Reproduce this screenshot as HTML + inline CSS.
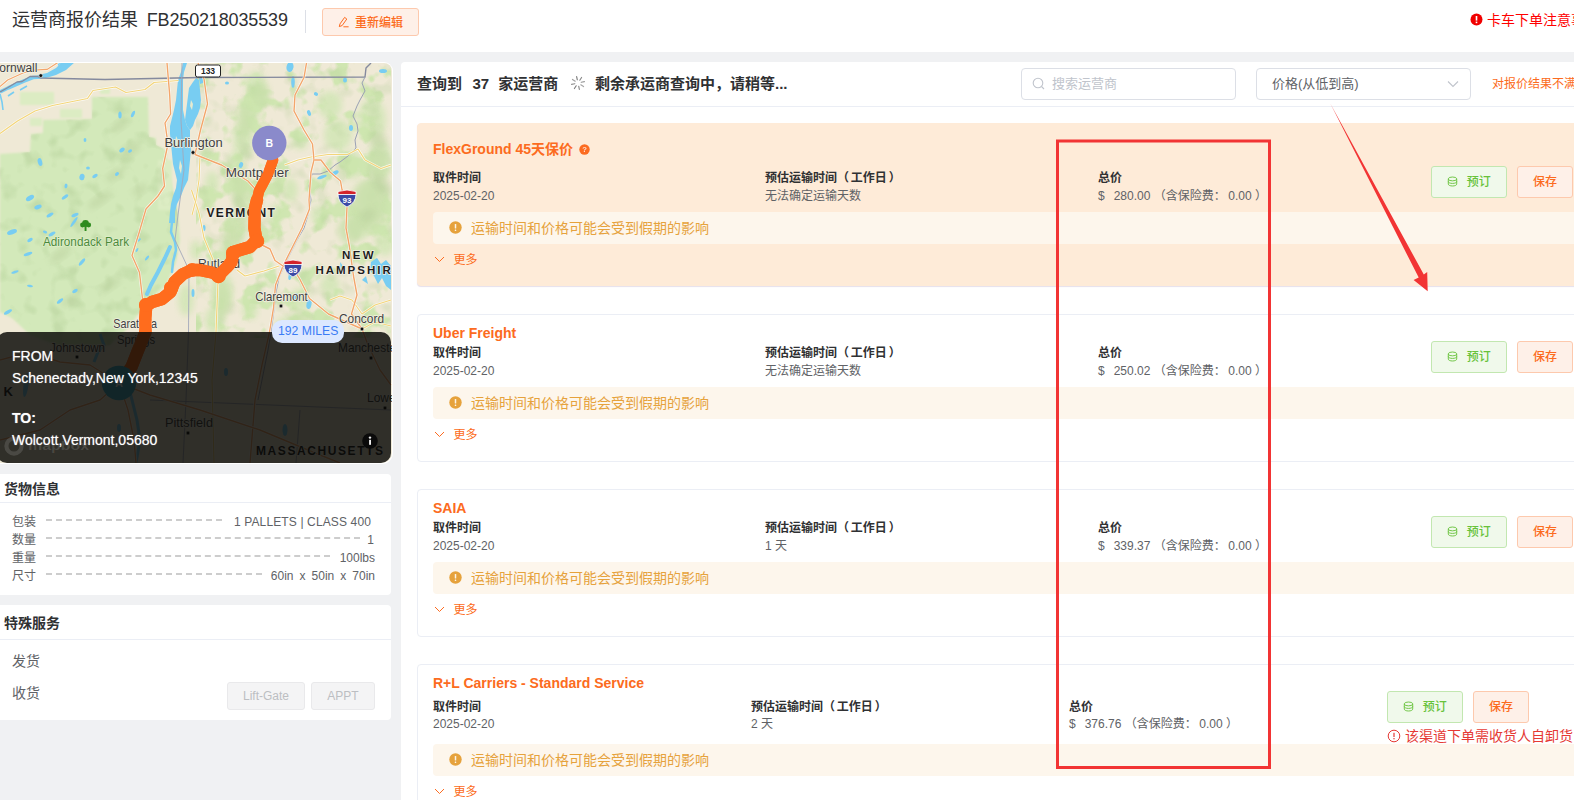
<!DOCTYPE html>
<html lang="zh-CN">
<head>
<meta charset="utf-8">
<title>运营商报价结果</title>
<style>
*{box-sizing:border-box;margin:0;padding:0}
html,body{width:1574px;height:800px;overflow:hidden;background:#f0f1f3}
body{position:relative;font-family:"Liberation Sans","Noto Sans CJK SC",sans-serif;font-size:12px;color:#606266}
.abs{position:absolute}
.t{position:absolute;white-space:nowrap;line-height:1}
#hdr{left:0;top:0;width:1574px;height:52px;background:#fff}
#title{left:12px;top:10px;font-size:18px;color:#303133;line-height:20px}
#vdiv{left:305px;top:10px;width:1px;height:23px;background:#dcdfe6}
.btn{position:absolute;border:1px solid;border-radius:3px;font-size:12px;line-height:1;white-space:nowrap;display:flex;align-items:center;justify-content:center}
.btn-o{background:#fef0e8;border-color:#fdc9ad;color:#fc6b20}
.btn-g{padding-top:.6px;background:#f0f9eb;border-color:#c2e7b0;color:#67c23a}
.btn-d{background:#f4f4f5;border-color:#e9e9eb;color:#bcbec2}
.b5{font-weight:500}
.panel{position:absolute;left:0;width:391px;background:#fff;border-radius:0 4px 4px 0}
.ph{position:absolute;left:4px;font-size:14px;font-weight:bold;color:#303133;line-height:1;white-space:nowrap}
.hl{position:absolute;left:0;width:391px;height:1px;background:#ebeef5}
#rp{left:401px;top:62px;width:1173px;height:738px;background:#fff;border-radius:4px 0 0 0}
.card{position:absolute;left:417px;width:1170px;border:1px solid #ebeef5;border-radius:4px;background:#fff}
.card.hot{background:#feebd8;border-color:#feebd8;box-shadow:0 1px 1px #e6e0ec}
.ct{position:absolute;white-space:nowrap;line-height:1;font-size:14px;font-weight:bold;color:#fc6b20}
.lb{position:absolute;white-space:nowrap;line-height:1;font-size:12px;font-weight:bold;color:#303133}
.vl{position:absolute;white-space:nowrap;line-height:1;font-size:12px;color:#606266}
.warn{position:absolute;left:433px;width:1150px;height:32px;background:#fdf6ec;border-radius:4px}
.wt{position:absolute;white-space:nowrap;line-height:1;font-size:14px;color:#e6a23c}
.dash{position:absolute;height:0;border-top:2px dashed #cdcdcd}
.more{position:absolute;white-space:nowrap;line-height:1;font-size:12px;color:#fc6b20}

#mapw{left:0;top:62px;width:392.6px;height:402.2px;border-radius:0 9px 11px 0;background:#fff}
#map{left:0;top:63px;width:391.9px;height:400.3px;border-radius:0 8px 10px 0;overflow:hidden;background:#efe9d6}
#map text{font-family:"Liberation Sans",sans-serif}
.mc{font-size:13px;fill:#3f3f3f;paint-order:stroke;stroke:#f4f0e4;stroke-width:1.6px;stroke-linejoin:round}
.ms{font-size:12px;font-weight:bold;fill:#1d1d1d;letter-spacing:3px;paint-order:stroke;stroke:#f4f0e4;stroke-width:1.4px}
#ov{left:-3px;top:332px;width:393.8px;height:131.4px;background:rgba(8,8,6,.83);border-radius:10px}
.ot{position:absolute;left:15px;white-space:nowrap;line-height:1;font-size:14px;color:#fff;text-shadow:0 0 1px rgba(255,255,255,.6)}
#miles{left:272.3px;top:320.4px;width:71.8px;height:23px;border-radius:10px;background:#dce8ff;color:#3b7cf5;font-size:12.2px;line-height:23px;text-align:center;white-space:nowrap}
</style>
</head>
<body>

<div id="hdr" class="abs"></div>
<div id="title" class="t">运营商报价结果&nbsp; <span style="letter-spacing:-0.15px;margin-left:-1.3px">FB250218035539</span></div>
<div id="vdiv" class="abs"></div>
<div class="btn btn-o b5" style="left:322px;top:8px;width:97px;height:28px;padding-top:2px">
  <svg width="12" height="12" viewBox="0 0 12 12" style="margin-right:5px;margin-top:-2px"><path d="M1.3 10.6 L2 7.9 L6.6 1.4 L8.8 3 L4.2 9.5 Z M5.4 10.8 H10.6" fill="none" stroke="#fc6b20" stroke-width="1" stroke-linejoin="round"/></svg>重新编辑</div>
<svg class="abs" style="left:1469.5px;top:13.2px" width="13" height="13" viewBox="0 0 13 13"><circle cx="6.5" cy="6.5" r="6" fill="#f00000"/><rect x="5.7" y="3" width="1.6" height="4.6" fill="#fff"/><rect x="5.7" y="8.6" width="1.6" height="1.6" fill="#fff"/></svg>
<div class="t" style="left:1487px;top:13px;font-size:14px;color:#f00">卡车下单注意事项</div>

<div id="mapw" class="abs"></div><div id="map" class="abs"><svg width="392" height="401" viewBox="0 0 392 401"><defs><filter id="bl" x="-20%" y="-20%" width="140%" height="140%"><feGaussianBlur stdDeviation="3"/></filter><filter id="bl2" x="-20%" y="-20%" width="140%" height="140%"><feGaussianBlur stdDeviation="1.2"/></filter><filter id="mott" x="0" y="0" width="100%" height="100%" color-interpolation-filters="sRGB"><feTurbulence type="fractalNoise" baseFrequency="0.045" numOctaves="3" seed="11"/><feColorMatrix type="matrix" values="0 0 0 0 0.80  0 0 0 0 0.90  0 0 0 0 0.68  7 0 0 0 -3.6"/></filter><filter id="mott2" x="0" y="0" width="100%" height="100%" color-interpolation-filters="sRGB"><feTurbulence type="fractalNoise" baseFrequency="0.06" numOctaves="2" seed="5"/><feColorMatrix type="matrix" values="0 0 0 0 0.66  0 0 0 0 0.78  0 0 0 0 0.55  0 4 0 0 -2.1"/></filter><clipPath id="adkc"><path d="M92.0 97.0 L148.0 97.0 L149.0 137.0 L156.0 138.0 L156.0 145.0 L166.0 150.0 L168.0 170.0 L173.0 190.0 L178.0 215.0 L180.0 240.0 L176.0 262.0 L166.0 285.0 L152.0 298.0 L140.0 312.0 L128.0 328.0 L110.0 345.0 L70.0 350.0 L30.0 335.0 L12.0 318.0 L0.0 312.0 L0.0 154.0 L30.0 152.0 L31.0 134.0 L43.0 133.0 L43.0 120.0 L92.0 119.0 Z"/></clipPath></defs><g transform="translate(0,-63)"><path d="M92.0 97.0 L148.0 97.0 L149.0 137.0 L156.0 138.0 L156.0 145.0 L166.0 150.0 L168.0 170.0 L173.0 190.0 L178.0 215.0 L180.0 240.0 L176.0 262.0 L166.0 285.0 L152.0 298.0 L140.0 312.0 L128.0 328.0 L110.0 345.0 L70.0 350.0 L30.0 335.0 L12.0 318.0 L0.0 312.0 L0.0 154.0 L30.0 152.0 L31.0 134.0 L43.0 133.0 L43.0 120.0 L92.0 119.0 Z" fill="#d3e9ba" filter="url(#bl2)"/><rect x="20" y="92" width="34" height="13" fill="#dcecc3" filter="url(#bl2)"/><rect x="60" y="109" width="22" height="9" fill="#dcecc3" filter="url(#bl2)"/><rect x="30" y="118" width="12" height="8" fill="#dcecc3" filter="url(#bl2)"/><rect x="100" y="88" width="10" height="6" fill="#dcecc3" filter="url(#bl2)"/><rect x="158" y="160" width="14" height="50" fill="#dcecc3" filter="url(#bl2)"/><ellipse cx="256" cy="85" rx="10" ry="14" fill="#d2e6b6" opacity=".85" filter="url(#bl)"/><ellipse cx="250" cy="110" rx="9" ry="16" fill="#d2e6b6" opacity=".85" filter="url(#bl)"/><ellipse cx="243" cy="140" rx="10" ry="18" fill="#d2e6b6" opacity=".85" filter="url(#bl)"/><ellipse cx="236" cy="165" rx="9" ry="14" fill="#d2e6b6" opacity=".85" filter="url(#bl)"/><ellipse cx="245" cy="195" rx="12" ry="20" fill="#d2e6b6" opacity=".85" filter="url(#bl)"/><ellipse cx="238" cy="225" rx="10" ry="16" fill="#d2e6b6" opacity=".85" filter="url(#bl)"/><ellipse cx="228" cy="255" rx="10" ry="14" fill="#d2e6b6" opacity=".85" filter="url(#bl)"/><ellipse cx="222" cy="290" rx="11" ry="18" fill="#d2e6b6" opacity=".85" filter="url(#bl)"/><ellipse cx="215" cy="320" rx="10" ry="14" fill="#d2e6b6" opacity=".85" filter="url(#bl)"/><ellipse cx="330" cy="105" rx="12" ry="14" fill="#d2e6b6" opacity=".85" filter="url(#bl)"/><ellipse cx="338" cy="135" rx="14" ry="16" fill="#d2e6b6" opacity=".85" filter="url(#bl)"/><ellipse cx="352" cy="165" rx="12" ry="14" fill="#d2e6b6" opacity=".85" filter="url(#bl)"/><ellipse cx="372" cy="120" rx="14" ry="22" fill="#d2e6b6" opacity=".85" filter="url(#bl)"/><ellipse cx="380" cy="160" rx="12" ry="20" fill="#d2e6b6" opacity=".85" filter="url(#bl)"/><ellipse cx="375" cy="200" rx="16" ry="22" fill="#d2e6b6" opacity=".85" filter="url(#bl)"/><ellipse cx="360" cy="225" rx="14" ry="14" fill="#d2e6b6" opacity=".85" filter="url(#bl)"/><ellipse cx="385" cy="240" rx="10" ry="16" fill="#d2e6b6" opacity=".85" filter="url(#bl)"/><ellipse cx="300" cy="140" rx="8" ry="10" fill="#d2e6b6" opacity=".85" filter="url(#bl)"/><ellipse cx="290" cy="190" rx="8" ry="12" fill="#d2e6b6" opacity=".85" filter="url(#bl)"/><ellipse cx="320" cy="215" rx="9" ry="10" fill="#d2e6b6" opacity=".85" filter="url(#bl)"/><ellipse cx="275" cy="215" rx="8" ry="10" fill="#d2e6b6" opacity=".85" filter="url(#bl)"/><ellipse cx="300" cy="300" rx="10" ry="12" fill="#d2e6b6" opacity=".85" filter="url(#bl)"/><ellipse cx="330" cy="285" rx="10" ry="10" fill="#d2e6b6" opacity=".85" filter="url(#bl)"/><ellipse cx="250" cy="310" rx="8" ry="10" fill="#d2e6b6" opacity=".85" filter="url(#bl)"/><ellipse cx="285" cy="325" rx="9" ry="8" fill="#d2e6b6" opacity=".85" filter="url(#bl)"/><ellipse cx="205" cy="150" rx="6" ry="12" fill="#d2e6b6" opacity=".85" filter="url(#bl)"/><ellipse cx="212" cy="185" rx="7" ry="14" fill="#d2e6b6" opacity=".85" filter="url(#bl)"/><ellipse cx="186" cy="300" rx="8" ry="16" fill="#d2e6b6" opacity=".85" filter="url(#bl)"/><ellipse cx="196" cy="250" rx="6" ry="10" fill="#d2e6b6" opacity=".85" filter="url(#bl)"/><rect x="196" y="63" width="195" height="275" filter="url(#mott)" opacity=".9"/><g clip-path="url(#adkc)"><rect x="0" y="90" width="185" height="260" filter="url(#mott2)" opacity=".35"/></g><rect x="196" y="63" width="195" height="275" filter="url(#mott2)" opacity=".22"/><ellipse cx="368" cy="205" rx="18" ry="26" fill="#c9e0ab" opacity=".8" filter="url(#bl)"/><ellipse cx="350" cy="230" rx="12" ry="14" fill="#c9e0ab" opacity=".8" filter="url(#bl)"/><ellipse cx="378" cy="165" rx="10" ry="16" fill="#c9e0ab" opacity=".8" filter="url(#bl)"/><ellipse cx="245" cy="120" rx="8" ry="18" fill="#c9e0ab" opacity=".8" filter="url(#bl)"/><ellipse cx="240" cy="185" rx="8" ry="16" fill="#c9e0ab" opacity=".8" filter="url(#bl)"/><ellipse cx="232" cy="235" rx="9" ry="16" fill="#c9e0ab" opacity=".8" filter="url(#bl)"/><ellipse cx="222" cy="300" rx="9" ry="16" fill="#c9e0ab" opacity=".8" filter="url(#bl)"/><ellipse cx="300" cy="320" rx="12" ry="8" fill="#c9e0ab" opacity=".8" filter="url(#bl)"/><ellipse cx="262" cy="95" rx="8" ry="12" fill="#c9e0ab" opacity=".8" filter="url(#bl)"/><ellipse cx="120" cy="125" rx="10" ry="5" fill="#b9cf9c" opacity=".5" filter="url(#bl)" transform="rotate(-35 120 125)"/><ellipse cx="130" cy="150" rx="12" ry="6" fill="#b9cf9c" opacity=".5" filter="url(#bl)" transform="rotate(-35 130 150)"/><ellipse cx="115" cy="175" rx="10" ry="5" fill="#b9cf9c" opacity=".5" filter="url(#bl)" transform="rotate(-35 115 175)"/><ellipse cx="100" cy="200" rx="14" ry="5" fill="#b9cf9c" opacity=".5" filter="url(#bl)" transform="rotate(-35 100 200)"/><ellipse cx="60" cy="255" rx="12" ry="5" fill="#b9cf9c" opacity=".5" filter="url(#bl)" transform="rotate(-35 60 255)"/><ellipse cx="110" cy="285" rx="12" ry="5" fill="#b9cf9c" opacity=".5" filter="url(#bl)" transform="rotate(-35 110 285)"/><ellipse cx="70" cy="300" rx="10" ry="4" fill="#b9cf9c" opacity=".5" filter="url(#bl)" transform="rotate(-35 70 300)"/><ellipse cx="140" cy="190" rx="8" ry="5" fill="#b9cf9c" opacity=".5" filter="url(#bl)" transform="rotate(-35 140 190)"/><ellipse cx="378" cy="140" rx="8" ry="10" fill="#b9cf9c" opacity=".5" filter="url(#bl)" transform="rotate(-35 378 140)"/><ellipse cx="382" cy="185" rx="7" ry="12" fill="#b9cf9c" opacity=".5" filter="url(#bl)" transform="rotate(-35 382 185)"/><ellipse cx="368" cy="215" rx="8" ry="6" fill="#b9cf9c" opacity=".5" filter="url(#bl)" transform="rotate(-35 368 215)"/><ellipse cx="246" cy="150" rx="4" ry="10" fill="#b9cf9c" opacity=".5" filter="url(#bl)" transform="rotate(-35 246 150)"/><ellipse cx="240" cy="205" rx="4" ry="12" fill="#b9cf9c" opacity=".5" filter="url(#bl)" transform="rotate(-35 240 205)"/><path d="M62 62 L75 62 L66 70 L56 75 L46 78 L40 78 L38 75 L47 73 L56 68 Z" fill="#78cdf2"/><path d="M42 77 L33 77.5 L24 81 L16 84.5 L8 88 L0 92" fill="none" stroke="#78cdf2" stroke-width="3.6" stroke-linejoin="round"/><path d="M58 63 L66 63 L60 67 Z M0 94 L2 102 L3 110 M8 96 L14 92 M20 90 L27 86" fill="none" stroke="#78cdf2" stroke-width="1.6"/><path d="M187.0 63.0 L184.0 72.0 L183.0 80.0 L183.0 90.0 L183.0 100.0 L183.0 110.0 L185.0 120.0 L187.0 126.0 L190.0 130.0 L190.0 140.0 L191.0 150.0 L190.0 160.0 L189.0 170.0 L188.0 180.0 L184.0 188.0 L181.0 196.0 L177.0 204.0 L175.0 212.0 L175.0 223.0 L169.0 223.0 L170.0 212.0 L171.0 204.0 L173.0 196.0 L176.0 188.0 L177.0 180.0 L175.0 172.0 L173.0 164.0 L172.0 154.0 L171.0 144.0 L170.0 134.0 L170.0 126.0 L172.0 118.0 L174.0 110.0 L176.0 100.0 L177.0 90.0 L178.0 80.0 L181.0 72.0 L183.0 63.0 Z" fill="#78cdf2"/><path d="M193.0 82.0 L196.0 78.0 L199.0 80.0 L200.0 90.0 L201.0 100.0 L200.0 108.0 L198.0 114.0 L195.0 120.0 L193.0 126.0 L190.0 130.0 L187.0 126.0 L185.0 120.0 L186.0 112.0 L187.0 104.0 L188.0 96.0 L189.0 88.0 Z" fill="#78cdf2"/><path d="M199 78 L204 77 L203 83 L200 84 Z" fill="#78cdf2"/><path d="M176.0 136.0 L178.0 140.0 L177.0 148.0 L175.0 144.0 Z" fill="#e6ead0"/><path d="M180.0 160.0 L182.0 166.0 L181.0 174.0 L179.0 168.0 Z" fill="#e6ead0"/><path d="M191.0 100.0 L193.0 104.0 L192.0 110.0 L190.0 106.0 Z" fill="#e6ead0"/><path d="M172 222 L171 232 L175 242 L176 250 L173 262 L172 272" fill="none" stroke="#78cdf2" stroke-width="2.5" stroke-linecap="round"/><path d="M170 247 L165 258 L158 272 L151 285 L147 294" fill="none" stroke="#78cdf2" stroke-width="4" stroke-linecap="round"/><ellipse cx="120" cy="115" rx="1.7" ry="3.6" fill="#78cdf2" transform="rotate(0 120 115)"/><ellipse cx="133" cy="114" rx="1.5" ry="3.6" fill="#78cdf2" transform="rotate(25 133 114)"/><ellipse cx="85" cy="140" rx="1.4" ry="2.0" fill="#78cdf2" transform="rotate(0 85 140)"/><ellipse cx="122" cy="150" rx="3.0" ry="2.0" fill="#78cdf2" transform="rotate(-40 122 150)"/><ellipse cx="130" cy="151" rx="2.2" ry="1.4" fill="#78cdf2" transform="rotate(-30 130 151)"/><ellipse cx="40" cy="162" rx="2.2" ry="4.0" fill="#78cdf2" transform="rotate(-15 40 162)"/><ellipse cx="88" cy="168" rx="1.9" ry="1.6" fill="#78cdf2" transform="rotate(0 88 168)"/><ellipse cx="82" cy="177" rx="2.6" ry="3.2" fill="#78cdf2" transform="rotate(10 82 177)"/><ellipse cx="95" cy="176" rx="3.0" ry="1.6" fill="#78cdf2" transform="rotate(-30 95 176)"/><ellipse cx="117" cy="174" rx="2.2" ry="1.6" fill="#78cdf2" transform="rotate(-40 117 174)"/><ellipse cx="66" cy="186" rx="1.5" ry="2.4" fill="#78cdf2" transform="rotate(10 66 186)"/><ellipse cx="30" cy="198" rx="4.5" ry="2.4" fill="#78cdf2" transform="rotate(-30 30 198)"/><ellipse cx="65" cy="197" rx="3.8" ry="1.6" fill="#78cdf2" transform="rotate(-35 65 197)"/><ellipse cx="12" cy="232" rx="5.2" ry="2.4" fill="#78cdf2" transform="rotate(-20 12 232)"/><ellipse cx="30" cy="240" rx="3.0" ry="1.6" fill="#78cdf2" transform="rotate(-30 30 240)"/><ellipse cx="50" cy="215" rx="3.8" ry="1.6" fill="#78cdf2" transform="rotate(-30 50 215)"/><ellipse cx="75" cy="215" rx="3.8" ry="1.6" fill="#78cdf2" transform="rotate(-25 75 215)"/><ellipse cx="38" cy="207" rx="3.8" ry="2.0" fill="#78cdf2" transform="rotate(-20 38 207)"/><ellipse cx="74" cy="222" rx="6.0" ry="1.4" fill="#78cdf2" transform="rotate(-55 74 222)"/><ellipse cx="52" cy="234" rx="3.8" ry="1.6" fill="#78cdf2" transform="rotate(-30 52 234)"/><ellipse cx="28" cy="254" rx="4.5" ry="1.6" fill="#78cdf2" transform="rotate(-20 28 254)"/><ellipse cx="82" cy="262" rx="4.5" ry="1.6" fill="#78cdf2" transform="rotate(-50 82 262)"/><ellipse cx="75" cy="291" rx="3.0" ry="1.6" fill="#78cdf2" transform="rotate(-30 75 291)"/><ellipse cx="60" cy="301" rx="3.8" ry="1.6" fill="#78cdf2" transform="rotate(-40 60 301)"/><ellipse cx="8" cy="312" rx="4.5" ry="1.6" fill="#78cdf2" transform="rotate(-30 8 312)"/><ellipse cx="30" cy="286" rx="3.0" ry="1.2" fill="#78cdf2" transform="rotate(10 30 286)"/><ellipse cx="15" cy="272" rx="3.8" ry="1.2" fill="#78cdf2" transform="rotate(-20 15 272)"/><ellipse cx="45" cy="232" rx="2.2" ry="1.2" fill="#78cdf2" transform="rotate(20 45 232)"/><ellipse cx="139" cy="240" rx="2.2" ry="1.1" fill="#78cdf2" transform="rotate(-40 139 240)"/><ellipse cx="147" cy="258" rx="3.0" ry="1.2" fill="#78cdf2" transform="rotate(-50 147 258)"/><ellipse cx="137" cy="250" rx="2.2" ry="1.0" fill="#78cdf2" transform="rotate(-60 137 250)"/><ellipse cx="290" cy="67" rx="3.5" ry="5" fill="#78cdf2" transform="rotate(10 290 67)"/><ellipse cx="293" cy="82" rx="1.8" ry="6" fill="#78cdf2" transform="rotate(0 293 82)"/><ellipse cx="227" cy="83" rx="2" ry="1.6" fill="#78cdf2" transform="rotate(0 227 83)"/><ellipse cx="316" cy="94" rx="2.2" ry="1.8" fill="#78cdf2" transform="rotate(30 316 94)"/><ellipse cx="309" cy="113" rx="1.8" ry="3" fill="#78cdf2" transform="rotate(-20 309 113)"/><ellipse cx="345" cy="80" rx="2" ry="2.5" fill="#78cdf2" transform="rotate(0 345 80)"/><ellipse cx="351" cy="128" rx="2" ry="3" fill="#78cdf2" transform="rotate(0 351 128)"/><ellipse cx="383" cy="71" rx="4" ry="2" fill="#78cdf2" transform="rotate(0 383 71)"/><ellipse cx="241" cy="165" rx="2" ry="3" fill="#78cdf2" transform="rotate(20 241 165)"/><ellipse cx="335" cy="173" rx="4" ry="2" fill="#78cdf2" transform="rotate(-30 335 173)"/><ellipse cx="322" cy="177" rx="5" ry="1.5" fill="#78cdf2" transform="rotate(-20 322 177)"/><ellipse cx="309" cy="304" rx="2.5" ry="5" fill="#78cdf2" transform="rotate(10 309 304)"/><ellipse cx="296" cy="297" rx="2" ry="4" fill="#78cdf2" transform="rotate(0 296 297)"/><ellipse cx="290" cy="276" rx="1.5" ry="4" fill="#78cdf2" transform="rotate(10 290 276)"/><ellipse cx="204" cy="228" rx="1.5" ry="3" fill="#78cdf2" transform="rotate(0 204 228)"/><ellipse cx="193" cy="293" rx="1.5" ry="4" fill="#78cdf2" transform="rotate(0 193 293)"/><path d="M371 262 L377 258 L381 264 L386 260 L391 266 L391 290 L386 286 L382 278 L378 284 L374 276 L370 270 Z M362 280 L366 276 L368 284 Z M340 262 L343 266 L341 272 Z" fill="#78cdf2"/><path d="M100 334 L104 345 L98 352 L94 362 M128 384 L132 400 L137 420 L140 440 L136 463" fill="none" stroke="#78cdf2" stroke-width="3"/><ellipse cx="26" cy="385" rx="2.5" ry="12" fill="#78cdf2" transform="rotate(8 26 385)"/><ellipse cx="119" cy="428" rx="2" ry="4" fill="#78cdf2"/><ellipse cx="285" cy="430" rx="2.5" ry="6" fill="#78cdf2"/><ellipse cx="226" cy="372" rx="2" ry="4" fill="#78cdf2"/><path d="M0 92 L8 87.5 L17 82 L22 81.5 L30 76.5 L38 76.5 L41 78 L105 79.5 L200 77.5 L365 77 L366 68 L371 63" fill="none" stroke="#858a9e" stroke-width="1.4" stroke-linejoin="round"/><path d="M365.0 77.0 L362.0 83.0 L365.0 91.0 L360.0 100.0 L357.0 106.0 L353.0 116.0 L357.0 124.0 L358.0 131.0 L355.0 140.0 L356.0 148.0 L348.0 156.0 L340.0 162.0 L335.0 165.0 L328.0 171.0 L320.0 174.0 L312.0 174.0 L309.0 186.0 L311.0 200.0 L308.0 215.0 L304.0 228.0 L297.0 240.0 L291.0 252.0 L285.0 264.0 L279.0 278.0 L276.0 292.0 L274.0 310.0 L271.0 332.0 L268.0 350.0 L262.0 380.0 L258.0 400.0" fill="none" stroke="#9aa0b4" stroke-width="1"/><path d="M189 270 L188.5 332 L186 400 L183 463 M182 63 L181 120 L184 170 L178 215 L175 240 L189 270 M150 400 L391 410 M300 410 L296 463" fill="none" stroke="#a3a8ba" stroke-width=".9"/><path d="M0.0 133.5 L17.5 121.0 L35.0 111.0 L52.5 105.5 L87.5 98.5 L93.0 90.5 L115.5 87.0 L126.0 92.5 L145.0 89.5 L154.0 82.5 L178.5 80.5" fill="none" stroke="#fff" stroke-width="2.4" stroke-linejoin="round" opacity=".8"/><path d="M0.0 133.5 L17.5 121.0 L35.0 111.0 L52.5 105.5 L87.5 98.5 L93.0 90.5 L115.5 87.0 L126.0 92.5 L145.0 89.5 L154.0 82.5 L178.5 80.5" fill="none" stroke="#f3d57a" stroke-width="1.2" stroke-linejoin="round"/><path d="M284.5 165.0 L298.0 160.0 L311.0 157.0 L328.0 154.5 L347.5 154.5 L358.0 149.0 L365.0 160.0 L381.0 168.5 L391.0 165.0" fill="none" stroke="#fff" stroke-width="2.4" stroke-linejoin="round" opacity=".8"/><path d="M284.5 165.0 L298.0 160.0 L311.0 157.0 L328.0 154.5 L347.5 154.5 L358.0 149.0 L365.0 160.0 L381.0 168.5 L391.0 165.0" fill="none" stroke="#f3d57a" stroke-width="1.2" stroke-linejoin="round"/><path d="M191.5 190.0 L199.0 213.0 L204.0 238.0 L212.5 258.5 L218.0 281.0 L216.0 332.0 L212.0 380.0 L214.0 463.0" fill="none" stroke="#fff" stroke-width="2.4" stroke-linejoin="round" opacity=".8"/><path d="M191.5 190.0 L199.0 213.0 L204.0 238.0 L212.5 258.5 L218.0 281.0 L216.0 332.0 L212.0 380.0 L214.0 463.0" fill="none" stroke="#f3d57a" stroke-width="1.2" stroke-linejoin="round"/><path d="M237.0 270.0 L245.0 276.0 L264.0 271.0 L279.0 266.0" fill="none" stroke="#fff" stroke-width="2.4" stroke-linejoin="round" opacity=".8"/><path d="M237.0 270.0 L245.0 276.0 L264.0 271.0 L279.0 266.0" fill="none" stroke="#f3d57a" stroke-width="1.2" stroke-linejoin="round"/><path d="M391.0 300.0 L375.0 305.0 L362.0 314.0 L352.0 300.0 L340.0 296.0 L330.0 300.0" fill="none" stroke="#fff" stroke-width="2.3" stroke-linejoin="round" opacity=".8"/><path d="M391.0 300.0 L375.0 305.0 L362.0 314.0 L352.0 300.0 L340.0 296.0 L330.0 300.0" fill="none" stroke="#f3d57a" stroke-width="1.1" stroke-linejoin="round"/><path d="M362.0 329.0 L375.0 322.0 L391.0 326.0" fill="none" stroke="#fff" stroke-width="2.3" stroke-linejoin="round" opacity=".8"/><path d="M362.0 329.0 L375.0 322.0 L391.0 326.0" fill="none" stroke="#f3d57a" stroke-width="1.1" stroke-linejoin="round"/><path d="M200.0 155.0 L199.0 180.0 L196.0 200.0 L192.0 215.0" fill="none" stroke="#fff" stroke-width="2.3" stroke-linejoin="round" opacity=".8"/><path d="M200.0 155.0 L199.0 180.0 L196.0 200.0 L192.0 215.0" fill="none" stroke="#f3d57a" stroke-width="1.1" stroke-linejoin="round"/><path d="M0.0 86.6 L7.6 80.0 L23.0 73.0 L33.5 70.2 L47.0 69.4 L58.7 62.0" fill="none" stroke="#fff" stroke-width="2.4" stroke-linejoin="round" opacity=".8"/><path d="M0.0 86.6 L7.6 80.0 L23.0 73.0 L33.5 70.2 L47.0 69.4 L58.7 62.0" fill="none" stroke="#f3a66b" stroke-width="1.2" stroke-linejoin="round"/><path d="M167.0 63.0 L169.7 95.0 L170.6 114.0 L165.0 123.0 L168.0 144.0 L162.7 168.5 L164.5 186.0 L158.0 196.0 L146.0 209.0 L139.0 233.0 L132.0 255.5 L139.5 272.5 L142.5 299.0" fill="none" stroke="#fff" stroke-width="2.5999999999999996" stroke-linejoin="round" opacity=".8"/><path d="M167.0 63.0 L169.7 95.0 L170.6 114.0 L165.0 123.0 L168.0 144.0 L162.7 168.5 L164.5 186.0 L158.0 196.0 L146.0 209.0 L139.0 233.0 L132.0 255.5 L139.5 272.5 L142.5 299.0" fill="none" stroke="#f3a66b" stroke-width="1.4" stroke-linejoin="round"/><path d="M204.0 79.0 L207.5 104.0 L200.5 130.0 L195.0 154.5 L221.5 165.0 L248.0 181.0 L256.0 190.0" fill="none" stroke="#fff" stroke-width="2.5999999999999996" stroke-linejoin="round" opacity=".8"/><path d="M204.0 79.0 L207.5 104.0 L200.5 130.0 L195.0 154.5 L221.5 165.0 L248.0 181.0 L256.0 190.0" fill="none" stroke="#f3a66b" stroke-width="1.4" stroke-linejoin="round"/><path d="M198.0 63.0 L204.0 79.0" fill="none" stroke="#fff" stroke-width="2.5999999999999996" stroke-linejoin="round" opacity=".8"/><path d="M198.0 63.0 L204.0 79.0" fill="none" stroke="#f3a66b" stroke-width="1.4" stroke-linejoin="round"/><path d="M306.5 63.0 L304.0 77.5 L295.0 95.0 L294.0 111.0 L304.0 130.0 L312.5 144.0 L314.0 160.0 L311.0 172.0 L309.0 200.0 L309.5 209.0 L302.0 228.0 L292.5 247.0 L283.0 266.0 L275.5 285.0 L273.5 308.0 L269.5 332.0 L262.0 365.0 L255.0 400.0 L250.0 463.0" fill="none" stroke="#fff" stroke-width="2.5999999999999996" stroke-linejoin="round" opacity=".8"/><path d="M306.5 63.0 L304.0 77.5 L295.0 95.0 L294.0 111.0 L304.0 130.0 L312.5 144.0 L314.0 160.0 L311.0 172.0 L309.0 200.0 L309.5 209.0 L302.0 228.0 L292.5 247.0 L283.0 266.0 L275.5 285.0 L273.5 308.0 L269.5 332.0 L262.0 365.0 L255.0 400.0 L250.0 463.0" fill="none" stroke="#f3a66b" stroke-width="1.4" stroke-linejoin="round"/><path d="M314.0 160.0 L321.0 160.0 L330.0 172.0 L340.5 181.0 L342.0 189.5 L347.0 207.0 L346.0 228.0 L349.5 247.0 L353.5 276.0 L357.0 295.0 L351.5 314.0 L362.0 329.0 L368.0 345.0 L380.0 370.0 L391.0 385.0" fill="none" stroke="#fff" stroke-width="2.5999999999999996" stroke-linejoin="round" opacity=".8"/><path d="M314.0 160.0 L321.0 160.0 L330.0 172.0 L340.5 181.0 L342.0 189.5 L347.0 207.0 L346.0 228.0 L349.5 247.0 L353.5 276.0 L357.0 295.0 L351.5 314.0 L362.0 329.0 L368.0 345.0 L380.0 370.0 L391.0 385.0" fill="none" stroke="#f3a66b" stroke-width="1.4" stroke-linejoin="round"/><path d="M262.0 245.0 L270.0 249.0 L275.0 260.5 L283.0 266.0 L293.0 268.0 L300.0 279.5 L309.5 298.5 L328.5 314.0 L362.0 329.0" fill="none" stroke="#fff" stroke-width="2.5999999999999996" stroke-linejoin="round" opacity=".8"/><path d="M262.0 245.0 L270.0 249.0 L275.0 260.5 L283.0 266.0 L293.0 268.0 L300.0 279.5 L309.5 298.5 L328.5 314.0 L362.0 329.0" fill="none" stroke="#f3a66b" stroke-width="1.4" stroke-linejoin="round"/><path d="M0.0 360.0 L30.0 352.0 L60.0 362.0 L90.0 365.0 L119.0 383.0 L150.0 395.0 L200.0 410.0 L260.0 430.0 L320.0 455.0 L340.0 463.0" fill="none" stroke="#fff" stroke-width="2.5999999999999996" stroke-linejoin="round" opacity=".8"/><path d="M0.0 360.0 L30.0 352.0 L60.0 362.0 L90.0 365.0 L119.0 383.0 L150.0 395.0 L200.0 410.0 L260.0 430.0 L320.0 455.0 L340.0 463.0" fill="none" stroke="#f3a66b" stroke-width="1.4" stroke-linejoin="round"/><path d="M119.0 383.0 L100.0 400.0 L70.0 410.0 L40.0 430.0 L0.0 440.0" fill="none" stroke="#fff" stroke-width="2.5999999999999996" stroke-linejoin="round" opacity=".8"/><path d="M119.0 383.0 L100.0 400.0 L70.0 410.0 L40.0 430.0 L0.0 440.0" fill="none" stroke="#f3a66b" stroke-width="1.4" stroke-linejoin="round"/><path d="M119.0 383.0 L128.0 410.0 L134.0 440.0 L136.0 463.0" fill="none" stroke="#fff" stroke-width="2.5999999999999996" stroke-linejoin="round" opacity=".8"/><path d="M119.0 383.0 L128.0 410.0 L134.0 440.0 L136.0 463.0" fill="none" stroke="#f3a66b" stroke-width="1.4" stroke-linejoin="round"/><path d="M269.3 143.0 L273.0 160.0 L268.0 174.0 L259.0 191.0 L257.0 200.0" fill="none" stroke="#ff6c1d" stroke-width="10.5" stroke-linejoin="round" stroke-linecap="round"/><path d="M257.0 200.0 L254.8 209.0 L254.4 228.0 L256.5 240.0 L250.0 247.0 L240.0 250.0 L233.5 252.0 L231.5 262.0 L226.0 268.0 L218.5 275.5 L212.0 272.5 L200.0 270.0 L192.0 270.0 L183.0 274.0 L174.5 282.0 L170.5 292.0 L162.0 299.0 L152.0 302.0 L146.3 306.0 L145.3 318.0 L145.5 332.0 L137.4 352.0 L131.5 367.0 L120.0 382.0" fill="none" stroke="#ff6c1d" stroke-width="12.3" stroke-linejoin="round" stroke-linecap="round"/><circle cx="257" cy="241" r="7.2" fill="#ff6c1d"/><circle cx="233" cy="253" r="7" fill="#ff6c1d"/><circle cx="218.5" cy="276" r="7.2" fill="#ff6c1d"/><circle cx="192" cy="270" r="6.8" fill="#ff6c1d"/><circle cx="171" cy="288" r="7" fill="#ff6c1d"/><circle cx="146" cy="305" r="7" fill="#ff6c1d"/><text x="-9.5" y="71.5" class="mc" style="font-size:12.5px" textLength="47" lengthAdjust="spacingAndGlyphs">Cornwall</text><circle cx="40.8" cy="75.6" r="1.9" fill="#111" stroke="#f4f0e4" stroke-width=".6"/><rect x="195.5" y="65" width="25" height="12" rx="2" fill="#fff" stroke="#222" stroke-width="1"/><text x="208" y="74.3" text-anchor="middle" font-size="8.5" font-weight="bold" fill="#222">133</text><text x="164.4" y="147" class="mc" style="font-size:13.5px" textLength="58.3" lengthAdjust="spacingAndGlyphs">Burlington</text><circle cx="193" cy="152.5" r="1.9" fill="#111" stroke="#f4f0e4" stroke-width=".6"/><text x="225.7" y="177" class="mc" style="font-size:13.5px" textLength="63" lengthAdjust="spacingAndGlyphs">Montpelier</text><text x="206.4" y="216.7" class="ms" style="font-size:12px;letter-spacing:0" textLength="68.5" lengthAdjust="spacing">VERMONT</text><text x="43" y="245.7" font-size="12.5" fill="#4b8a3a" textLength="86" lengthAdjust="spacingAndGlyphs" style="paint-order:stroke;stroke:#e3f0d0;stroke-width:1.2px">Adirondack Park</text><g fill="#2e8b1f"><circle cx="85.5" cy="223.5" r="3.4"/><circle cx="82.5" cy="225" r="2.4"/><circle cx="88.7" cy="225" r="2.4"/><rect x="84.6" y="225" width="1.9" height="6"/></g><text x="342" y="258.6" class="ms" style="font-size:11.5px;letter-spacing:0" textLength="31.5" lengthAdjust="spacing">NEW</text><text x="315.4" y="274.2" class="ms" style="font-size:11.5px;letter-spacing:0" textLength="85" lengthAdjust="spacing">HAMPSHIRE</text><text x="198" y="267.5" class="mc" style="font-size:13.5px" textLength="42" lengthAdjust="spacingAndGlyphs">Rutland</text><text x="255.3" y="300.5" class="mc" style="font-size:13.5px" textLength="52.4" lengthAdjust="spacingAndGlyphs">Claremont</text><circle cx="281" cy="306" r="1.9" fill="#111" stroke="#f4f0e4" stroke-width=".6"/><text x="339" y="322.5" class="mc" style="font-size:13.5px" textLength="45" lengthAdjust="spacingAndGlyphs">Concord</text><circle cx="362" cy="329" r="1.9" fill="#111" stroke="#f4f0e4" stroke-width=".6"/><text x="113.3" y="328" class="mc" style="font-size:13.5px" textLength="43.7" lengthAdjust="spacingAndGlyphs">Saratoga</text><text x="117" y="343.5" class="mc" style="font-size:13.5px" textLength="38" lengthAdjust="spacingAndGlyphs">Springs</text><text x="50" y="352" class="mc" style="font-size:13.5px" textLength="55" lengthAdjust="spacingAndGlyphs">Johnstown</text><circle cx="77" cy="357" r="1.9" fill="#111" stroke="#f4f0e4" stroke-width=".6"/><text x="338" y="352" class="mc" style="font-size:13.5px" textLength="62" lengthAdjust="spacingAndGlyphs">Manchester</text><circle cx="371" cy="358" r="1.9" fill="#111" stroke="#f4f0e4" stroke-width=".6"/><text x="165" y="427" class="mc" style="font-size:13.5px" textLength="48" lengthAdjust="spacingAndGlyphs">Pittsfield</text><circle cx="188" cy="433" r="1.9" fill="#111" stroke="#f4f0e4" stroke-width=".6"/><text x="367" y="402" class="mc" style="font-size:13.5px" textLength="34" lengthAdjust="spacingAndGlyphs">Lowell</text><circle cx="385" cy="408" r="1.9" fill="#111" stroke="#f4f0e4" stroke-width=".6"/><text x="256" y="455" class="ms" style="font-size:12px;letter-spacing:0" textLength="127" lengthAdjust="spacing">MASSACHUSETTS</text><text x="-10" y="396" class="ms" style="font-size:13px;letter-spacing:0" textLength="23" lengthAdjust="spacing">RK</text><path d="M269.3 143.0 L273.0 160.0 L268.0 174.0 L259.0 191.0 L257.0 200.0" fill="none" stroke="#ff6c1d" stroke-width="10.5" stroke-linejoin="round" stroke-linecap="round"/><path d="M257.0 200.0 L254.8 209.0 L254.4 228.0 L256.5 240.0 L250.0 247.0 L240.0 250.0 L233.5 252.0 L231.5 262.0 L226.0 268.0 L218.5 275.5 L212.0 272.5 L200.0 270.0 L192.0 270.0 L183.0 274.0 L174.5 282.0 L170.5 292.0 L162.0 299.0 L152.0 302.0 L146.3 306.0 L145.3 318.0 L145.5 332.0 L137.4 352.0 L131.5 367.0 L120.0 382.0" fill="none" stroke="#ff6c1d" stroke-width="12.3" stroke-linejoin="round" stroke-linecap="round"/><circle cx="257" cy="241" r="7.2" fill="#ff6c1d"/><circle cx="233" cy="253" r="7" fill="#ff6c1d"/><circle cx="218.5" cy="276" r="7.2" fill="#ff6c1d"/><circle cx="192" cy="270" r="6.8" fill="#ff6c1d"/><circle cx="171" cy="288" r="7" fill="#ff6c1d"/><circle cx="146" cy="305" r="7" fill="#ff6c1d"/><g><path d="M338 191.5 Q347 188.5 356 191.5 L356 194.5 L338 194.5 Z" fill="#d3222a" stroke="#fff" stroke-width=".8"/><path d="M338 194.5 L356 194.5 Q356 202.5 347 207.0 Q338 202.5 338 194.5 Z" fill="#3b4aa6" stroke="#fff" stroke-width=".8"/><text x="347" y="202.5" text-anchor="middle" font-size="8" font-weight="bold" fill="#fff">93</text></g><g><path d="M284 261.5 Q293 258.5 302 261.5 L302 264.5 L284 264.5 Z" fill="#d3222a" stroke="#fff" stroke-width=".8"/><path d="M284 264.5 L302 264.5 Q302 272.5 293 277.0 Q284 272.5 284 264.5 Z" fill="#3b4aa6" stroke="#fff" stroke-width=".8"/><text x="293" y="272.5" text-anchor="middle" font-size="8" font-weight="bold" fill="#fff">89</text></g><circle cx="269.3" cy="143" r="17.2" fill="#8a8acb"/><text x="269.3" y="147" text-anchor="middle" font-size="10.5" font-weight="bold" fill="#fff">B</text><circle cx="119" cy="383" r="17.2" fill="#3bb2d0"/><text x="119" y="387" text-anchor="middle" font-size="10.5" font-weight="bold" fill="#fff">A</text></g></svg></div>
<div id="ov" class="abs">
<div class="ot" style="top:17px">FROM</div>
<div class="ot" style="top:39px">Schenectady,New York,12345</div>
<div class="ot" style="top:79px;font-weight:bold">TO:</div>
<div class="ot" style="top:101px">Wolcott,Vermont,05680</div>
<svg class="abs" style="left:4px;top:103px" width="92" height="24" viewBox="0 0 92 24"><circle cx="13" cy="11" r="7.6" fill="none" stroke="#fff" stroke-opacity=".13" stroke-width="4.2"/><text x="27" y="15.2" font-family="Liberation Sans,sans-serif" font-size="12.5" font-weight="bold" fill="#fff" fill-opacity=".13" textLength="61" lengthAdjust="spacingAndGlyphs">mapbox</text></svg>
<svg class="abs" style="left:365px;top:101px" width="16" height="16" viewBox="0 0 16 16"><circle cx="8" cy="8" r="7.8" fill="#0a0a0a"/><rect x="7.1" y="6.8" width="1.9" height="5" fill="#eee"/><circle cx="8" cy="4.6" r="1.2" fill="#eee"/></svg>
</div>
<div id="miles" class="abs">192 MILES</div>


<div class="panel" style="top:473.5px;height:121.3px"></div>
<div class="ph" style="top:482px">货物信息</div>
<div class="hl" style="top:502px"></div>
<div class="panel" style="top:605px;height:115px"></div>
<div class="ph" style="top:616px">特殊服务</div>
<div class="hl" style="top:639px"></div>
<div class="vl" style="left:12px;top:516px">包装</div>
<div class="vl" style="left:12px;top:534px">数量</div>
<div class="vl" style="left:12px;top:552px">重量</div>
<div class="vl" style="left:12px;top:570px">尺寸</div>
<div class="dash" style="left:46px;top:519px;width:176px"></div>
<div class="dash" style="left:46px;top:537px;width:314px"></div>
<div class="dash" style="left:46px;top:555px;width:284px"></div>
<div class="dash" style="left:46px;top:573px;width:216px"></div>
<div class="vl r" style="right:1203px;top:516px;letter-spacing:.13px">1 PALLETS | CLASS 400</div>
<div class="vl r" style="right:1200px;top:534px">1</div>
<div class="vl r" style="right:1199px;top:552px">100lbs</div>
<div class="vl r" style="right:1199px;top:570px;word-spacing:-.32px">60in&nbsp; x&nbsp; 50in&nbsp; x&nbsp; 70in</div>
<div class="vl" style="left:12px;top:654px;font-size:14px">发货</div>
<div class="vl" style="left:12px;top:686px;font-size:14px">收货</div>
<div class="btn btn-d" style="left:227px;top:682px;width:78px;height:28px">Lift-Gate</div>
<div class="btn btn-d" style="left:311px;top:682px;width:64px;height:28px">APPT</div>


<div id="rp" class="abs"></div>
<div class="t" style="left:417px;top:76px;font-size:15px;font-weight:bold;color:#303133">查询到<span style="margin-left:10.4px">37</span><span style="margin-left:9.2px">家运营商</span></div>
<svg class="abs" style="left:569.5px;top:75.3px" width="16" height="16" viewBox="0 0 16 16" fill="none" stroke-width="1.15" stroke-linecap="round"><path d="M7.31 4.77L6.63 1.54" stroke="#7d7d7d"/><path d="M9.80 5.23L11.59 2.46" stroke="#8a8a8a"/><path d="M11.23 7.31L14.46 6.63" stroke="#999"/><path d="M10.77 9.80L13.54 11.59" stroke="#a6a6a6"/><path d="M8.69 11.23L9.37 14.46" stroke="#8a8a8a"/><path d="M6.20 10.77L4.41 13.54" stroke="#7d7d7d"/><path d="M4.77 8.69L1.54 9.37" stroke="#909090"/><path d="M5.23 6.20L2.46 4.41" stroke="#a0a0a0"/></svg>
<div class="t" style="left:595px;top:76px;font-size:15px;font-weight:bold;color:#303133">剩余承运商查询中，请稍等...</div>
<div class="abs" style="left:1021px;top:68px;width:215px;height:32px;border:1px solid #dcdfe6;border-radius:4px;background:#fff"></div>
<svg class="abs" style="left:1031px;top:76px" width="15" height="15" viewBox="0 0 15 15" fill="none" stroke="#c0c4cc" stroke-width="1.1"><circle cx="7" cy="7" r="4.8"/><path d="M10.5 10.5L13 13"/></svg>
<div class="t" style="left:1052px;top:77px;font-size:13px;color:#c0c4cc">搜索运营商</div>
<div class="abs" style="left:1256px;top:68px;width:215px;height:32px;border:1px solid #dcdfe6;border-radius:4px;background:#fff"></div>
<div class="t" style="left:1272px;top:77px;font-size:13px;color:#606266">价格(从低到高)</div>
<svg class="abs" style="left:1447.3px;top:79.8px" width="12" height="8" viewBox="0 0 12 8"><path d="M1 1.5 L6 6.5 L11 1.5" fill="none" stroke="#c0c4cc" stroke-width="1.1"/></svg>
<div class="t" style="left:1492px;top:78px;font-size:12px;color:#fc6b20">对报价结果不满意</div>
<div class="abs" style="left:401px;top:106px;width:1173px;height:1px;background:#ebeef5"></div>
<div class="card hot" style="top:123px;height:163px"></div>
<div class="ct" style="left:433px;top:142px">FlexGround 45天保价</div>
<div class="lb" style="left:433px;top:172px">取件时间</div>
<div class="vl" style="left:433px;top:190px">2025-02-20</div>
<div class="lb" style="left:765px;top:172px">预估运输时间（<span style="margin-left:1.8px">工作日</span><span style="margin-left:1.8px">）</span></div>
<div class="vl" style="left:765px;top:190px">无法确定运输天数</div>
<div class="lb" style="left:1098px;top:172px">总价</div>
<div class="vl" style="left:1098px;top:190px">$<span style="margin-left:9px">280.00</span><span style="margin-left:3.4px">（含保险费：</span><span style="margin-left:2.5px">0.00</span><span style="margin-left:3.4px">）</span></div>
<div class="btn btn-g b5" style="left:1431px;top:166px;width:76px;height:32px"><svg width="11" height="11" viewBox="0 0 12 12" style="margin-right:8.6px;margin-top:-1.8px"><ellipse cx="6" cy="3.2" rx="4.6" ry="2.1" fill="none" stroke="#67c23a" stroke-width="1"/><path d="M1.4 3.2 V8.8 C1.4 10 3.4 10.9 6 10.9 S10.6 10 10.6 8.8 V3.2 M1.4 6 C1.4 7.2 3.4 8.1 6 8.1 S10.6 7.2 10.6 6" fill="none" stroke="#67c23a" stroke-width="1"/></svg>预订</div>
<div class="btn btn-o b5" style="left:1517px;top:166px;width:56px;height:32px;padding-top:.6px">保存</div>
<div class="warn" style="top:212px"></div>
<svg class="abs" style="left:449.3px;top:221.3px" width="13" height="13" viewBox="0 0 13 13"><circle cx="6.5" cy="6.5" r="6.2" fill="#e6a23c"/><rect x="5.75" y="3.1" width="1.5" height="4.4" rx=".5" fill="#fff" opacity=".88"/><rect x="5.75" y="8.5" width="1.5" height="1.5" rx=".5" fill="#fff" opacity=".88"/></svg>
<div class="wt" style="left:471px;top:221px">运输时间和价格可能会受到假期的影响</div>
<svg class="abs" style="left:433.8px;top:255.8px" width="11" height="7" viewBox="0 0 11 7"><path d="M1 1 L5.5 5.5 L10 1" fill="none" stroke="#fc6b20" stroke-width="1"/></svg>
<div class="more" style="left:453.5px;top:254px">更多</div>
<svg class="abs" style="left:578.5px;top:143.9px" width="11" height="11" viewBox="0 0 11 11"><circle cx="5.5" cy="5.5" r="5.2" fill="#fc6b20"/><text x="5.5" y="8.2" font-size="7.6" font-weight="bold" opacity=".8" font-family="Liberation Sans,sans-serif" fill="#fff" text-anchor="middle">?</text></svg>
<div class="card" style="top:314px;height:148px"></div>
<div class="ct" style="left:433px;top:326px">Uber Freight</div>
<div class="lb" style="left:433px;top:347px">取件时间</div>
<div class="vl" style="left:433px;top:365px">2025-02-20</div>
<div class="lb" style="left:765px;top:347px">预估运输时间（<span style="margin-left:1.8px">工作日</span><span style="margin-left:1.8px">）</span></div>
<div class="vl" style="left:765px;top:365px">无法确定运输天数</div>
<div class="lb" style="left:1098px;top:347px">总价</div>
<div class="vl" style="left:1098px;top:365px">$<span style="margin-left:9px">250.02</span><span style="margin-left:3.4px">（含保险费：</span><span style="margin-left:2.5px">0.00</span><span style="margin-left:3.4px">）</span></div>
<div class="btn btn-g b5" style="left:1431px;top:341px;width:76px;height:32px"><svg width="11" height="11" viewBox="0 0 12 12" style="margin-right:8.6px;margin-top:-1.8px"><ellipse cx="6" cy="3.2" rx="4.6" ry="2.1" fill="none" stroke="#67c23a" stroke-width="1"/><path d="M1.4 3.2 V8.8 C1.4 10 3.4 10.9 6 10.9 S10.6 10 10.6 8.8 V3.2 M1.4 6 C1.4 7.2 3.4 8.1 6 8.1 S10.6 7.2 10.6 6" fill="none" stroke="#67c23a" stroke-width="1"/></svg>预订</div>
<div class="btn btn-o b5" style="left:1517px;top:341px;width:56px;height:32px;padding-top:.6px">保存</div>
<div class="warn" style="top:387px"></div>
<svg class="abs" style="left:449.3px;top:396.3px" width="13" height="13" viewBox="0 0 13 13"><circle cx="6.5" cy="6.5" r="6.2" fill="#e6a23c"/><rect x="5.75" y="3.1" width="1.5" height="4.4" rx=".5" fill="#fff" opacity=".88"/><rect x="5.75" y="8.5" width="1.5" height="1.5" rx=".5" fill="#fff" opacity=".88"/></svg>
<div class="wt" style="left:471px;top:396px">运输时间和价格可能会受到假期的影响</div>
<svg class="abs" style="left:433.8px;top:430.8px" width="11" height="7" viewBox="0 0 11 7"><path d="M1 1 L5.5 5.5 L10 1" fill="none" stroke="#fc6b20" stroke-width="1"/></svg>
<div class="more" style="left:453.5px;top:429px">更多</div>
<div class="card" style="top:489px;height:148px"></div>
<div class="ct" style="left:433px;top:501px">SAIA</div>
<div class="lb" style="left:433px;top:522px">取件时间</div>
<div class="vl" style="left:433px;top:540px">2025-02-20</div>
<div class="lb" style="left:765px;top:522px">预估运输时间（<span style="margin-left:1.8px">工作日</span><span style="margin-left:1.8px">）</span></div>
<div class="vl" style="left:765px;top:540px">1 天</div>
<div class="lb" style="left:1098px;top:522px">总价</div>
<div class="vl" style="left:1098px;top:540px">$<span style="margin-left:9px">339.37</span><span style="margin-left:3.4px">（含保险费：</span><span style="margin-left:2.5px">0.00</span><span style="margin-left:3.4px">）</span></div>
<div class="btn btn-g b5" style="left:1431px;top:516px;width:76px;height:32px"><svg width="11" height="11" viewBox="0 0 12 12" style="margin-right:8.6px;margin-top:-1.8px"><ellipse cx="6" cy="3.2" rx="4.6" ry="2.1" fill="none" stroke="#67c23a" stroke-width="1"/><path d="M1.4 3.2 V8.8 C1.4 10 3.4 10.9 6 10.9 S10.6 10 10.6 8.8 V3.2 M1.4 6 C1.4 7.2 3.4 8.1 6 8.1 S10.6 7.2 10.6 6" fill="none" stroke="#67c23a" stroke-width="1"/></svg>预订</div>
<div class="btn btn-o b5" style="left:1517px;top:516px;width:56px;height:32px;padding-top:.6px">保存</div>
<div class="warn" style="top:562px"></div>
<svg class="abs" style="left:449.3px;top:571.3px" width="13" height="13" viewBox="0 0 13 13"><circle cx="6.5" cy="6.5" r="6.2" fill="#e6a23c"/><rect x="5.75" y="3.1" width="1.5" height="4.4" rx=".5" fill="#fff" opacity=".88"/><rect x="5.75" y="8.5" width="1.5" height="1.5" rx=".5" fill="#fff" opacity=".88"/></svg>
<div class="wt" style="left:471px;top:571px">运输时间和价格可能会受到假期的影响</div>
<svg class="abs" style="left:433.8px;top:605.8px" width="11" height="7" viewBox="0 0 11 7"><path d="M1 1 L5.5 5.5 L10 1" fill="none" stroke="#fc6b20" stroke-width="1"/></svg>
<div class="more" style="left:453.5px;top:604px">更多</div>
<div class="card" style="top:664px;height:160px"></div>
<div class="ct" style="left:433px;top:676px">R+L Carriers - Standard Service</div>
<div class="lb" style="left:433px;top:701px">取件时间</div>
<div class="vl" style="left:433px;top:718px">2025-02-20</div>
<div class="lb" style="left:751px;top:701px">预估运输时间（<span style="margin-left:1.8px">工作日</span><span style="margin-left:1.8px">）</span></div>
<div class="vl" style="left:751px;top:718px">2 天</div>
<div class="lb" style="left:1069px;top:701px">总价</div>
<div class="vl" style="left:1069px;top:718px">$<span style="margin-left:9px">376.76</span><span style="margin-left:3.4px">（含保险费：</span><span style="margin-left:2.5px">0.00</span><span style="margin-left:3.4px">）</span></div>
<div class="btn btn-g b5" style="left:1387px;top:691px;width:76px;height:32px"><svg width="11" height="11" viewBox="0 0 12 12" style="margin-right:8.6px;margin-top:-1.8px"><ellipse cx="6" cy="3.2" rx="4.6" ry="2.1" fill="none" stroke="#67c23a" stroke-width="1"/><path d="M1.4 3.2 V8.8 C1.4 10 3.4 10.9 6 10.9 S10.6 10 10.6 8.8 V3.2 M1.4 6 C1.4 7.2 3.4 8.1 6 8.1 S10.6 7.2 10.6 6" fill="none" stroke="#67c23a" stroke-width="1"/></svg>预订</div>
<div class="btn btn-o b5" style="left:1473px;top:691px;width:56px;height:32px;padding-top:.6px">保存</div>
<div class="warn" style="top:744px"></div>
<svg class="abs" style="left:449.3px;top:753.3px" width="13" height="13" viewBox="0 0 13 13"><circle cx="6.5" cy="6.5" r="6.2" fill="#e6a23c"/><rect x="5.75" y="3.1" width="1.5" height="4.4" rx=".5" fill="#fff" opacity=".88"/><rect x="5.75" y="8.5" width="1.5" height="1.5" rx=".5" fill="#fff" opacity=".88"/></svg>
<div class="wt" style="left:471px;top:753px">运输时间和价格可能会受到假期的影响</div>
<svg class="abs" style="left:433.8px;top:787.8px" width="11" height="7" viewBox="0 0 11 7"><path d="M1 1 L5.5 5.5 L10 1" fill="none" stroke="#fc6b20" stroke-width="1"/></svg>
<div class="more" style="left:453.5px;top:786px">更多</div>
<svg class="abs" style="left:1387px;top:729px" width="14" height="14" viewBox="0 0 14 14"><circle cx="7" cy="7" r="5.8" fill="none" stroke="#e53935" stroke-width="1"/><rect x="6.4" y="3.8" width="1.2" height="4.2" fill="#e53935"/><rect x="6.4" y="9" width="1.2" height="1.3" fill="#e53935"/></svg>
<div class="t" style="left:1405px;top:729px;font-size:14px;color:#e53935">该渠道下单需收货人自卸货</div>


<svg class="abs" style="left:0;top:0;pointer-events:none" width="1574" height="800" viewBox="0 0 1574 800">
<rect x="1057.5" y="141" width="212" height="626.5" fill="none" stroke="#f23434" stroke-width="3"/>
<path d="M1330.3 103.5 L1418.7 277.6 L1413.6 280.1 L1427.7 291.2 L1427.2 271.9 L1423.8 274.5 Z" fill="#f23434"/>
</svg>

</body>
</html>
